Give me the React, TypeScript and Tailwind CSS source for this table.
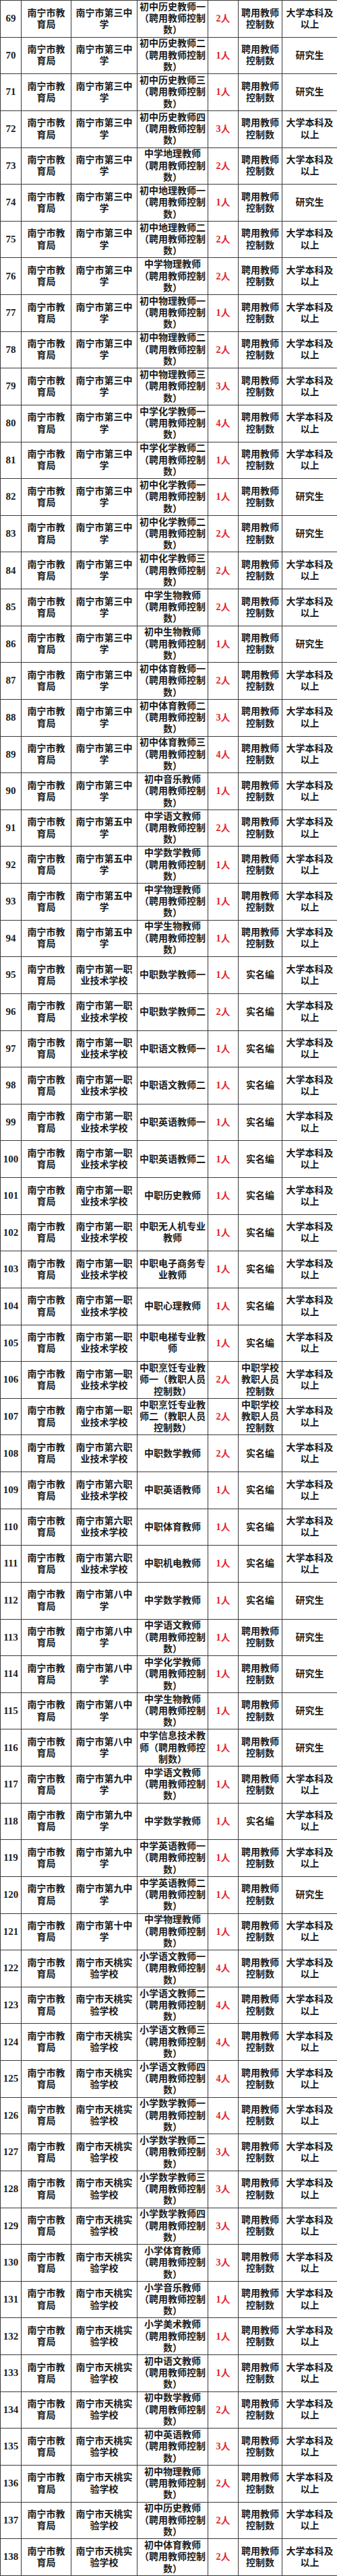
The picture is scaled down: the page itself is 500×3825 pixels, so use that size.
const DEPT = '南宁市教育局'
const HIRE = '聘用教师控制数'
const REAL = '实名编'
const ZZ = '中职学校教职人员控制数'
const BK = '大学本科及以上'
const YJS = '研究生'
const P = '（聘用教师控制数）'

const S3 = '南宁市第三中学'
const S5 = '南宁市第五中学'
const S8 = '南宁市第八中学'
const S9 = '南宁市第九中学'
const S10 = '南宁市第十中学'
const ZY1 = '南宁市第一职业技术学校'
const ZY6 = '南宁市第六职业技术学校'
const TT = '南宁市天桃实验学校'

type Row = [number, string, string, number, string, string]

const rows: Row[] = [
  [69, S3, '初中历史教师一' + P, 2, HIRE, BK],
  [70, S3, '初中历史教师二' + P, 1, HIRE, YJS],
  [71, S3, '初中历史教师三' + P, 1, HIRE, YJS],
  [72, S3, '初中历史教师四' + P, 3, HIRE, BK],
  [73, S3, '中学地理教师' + P, 2, HIRE, BK],
  [74, S3, '初中地理教师一' + P, 1, HIRE, YJS],
  [75, S3, '初中地理教师二' + P, 2, HIRE, BK],
  [76, S3, '中学物理教师' + P, 2, HIRE, BK],
  [77, S3, '初中物理教师一' + P, 1, HIRE, BK],
  [78, S3, '初中物理教师二' + P, 2, HIRE, BK],
  [79, S3, '初中物理教师三' + P, 3, HIRE, BK],
  [80, S3, '中学化学教师一' + P, 4, HIRE, BK],
  [81, S3, '中学化学教师二' + P, 1, HIRE, BK],
  [82, S3, '初中化学教师一' + P, 1, HIRE, YJS],
  [83, S3, '初中化学教师二' + P, 2, HIRE, YJS],
  [84, S3, '初中化学教师三' + P, 2, HIRE, BK],
  [85, S3, '中学生物教师' + P, 2, HIRE, BK],
  [86, S3, '初中生物教师' + P, 1, HIRE, YJS],
  [87, S3, '初中体育教师一' + P, 2, HIRE, BK],
  [88, S3, '初中体育教师二' + P, 3, HIRE, BK],
  [89, S3, '初中体育教师三' + P, 4, HIRE, BK],
  [90, S3, '初中音乐教师' + P, 1, HIRE, BK],
  [91, S5, '中学语文教师' + P, 2, HIRE, BK],
  [92, S5, '中学数学教师' + P, 1, HIRE, BK],
  [93, S5, '中学物理教师' + P, 1, HIRE, BK],
  [94, S5, '中学生物教师' + P, 1, HIRE, BK],
  [95, ZY1, '中职数学教师一', 1, REAL, BK],
  [96, ZY1, '中职数学教师二', 2, REAL, BK],
  [97, ZY1, '中职语文教师一', 1, REAL, BK],
  [98, ZY1, '中职语文教师二', 1, REAL, BK],
  [99, ZY1, '中职英语教师一', 1, REAL, BK],
  [100, ZY1, '中职英语教师二', 1, REAL, BK],
  [101, ZY1, '中职历史教师', 1, REAL, BK],
  [102, ZY1, '中职无人机专业教师', 1, REAL, BK],
  [103, ZY1, '中职电子商务专业教师', 1, REAL, BK],
  [104, ZY1, '中职心理教师', 1, REAL, BK],
  [105, ZY1, '中职电梯专业教师', 1, REAL, BK],
  [106, ZY1, '中职烹饪专业教师一（教职人员控制数）', 2, ZZ, BK],
  [107, ZY1, '中职烹饪专业教师二（教职人员控制数）', 2, ZZ, BK],
  [108, ZY6, '中职数学教师', 2, REAL, BK],
  [109, ZY6, '中职英语教师', 1, REAL, BK],
  [110, ZY6, '中职体育教师', 1, REAL, BK],
  [111, ZY6, '中职机电教师', 1, REAL, BK],
  [112, S8, '中学数学教师', 1, REAL, YJS],
  [113, S8, '中学语文教师' + P, 1, HIRE, YJS],
  [114, S8, '中学化学教师' + P, 1, HIRE, YJS],
  [115, S8, '中学生物教师' + P, 1, HIRE, YJS],
  [116, S8, '中学信息技术教师' + P, 1, HIRE, YJS],
  [117, S9, '中学语文教师' + P, 1, HIRE, BK],
  [118, S9, '中学数学教师', 1, REAL, BK],
  [119, S9, '中学英语教师一' + P, 1, HIRE, BK],
  [120, S9, '中学英语教师二' + P, 1, HIRE, YJS],
  [121, S10, '中学物理教师' + P, 1, HIRE, BK],
  [122, TT, '小学语文教师一' + P, 4, HIRE, BK],
  [123, TT, '小学语文教师二' + P, 4, HIRE, BK],
  [124, TT, '小学语文教师三' + P, 4, HIRE, BK],
  [125, TT, '小学语文教师四' + P, 4, HIRE, BK],
  [126, TT, '小学数学教师一' + P, 4, HIRE, BK],
  [127, TT, '小学数学教师二' + P, 3, HIRE, BK],
  [128, TT, '小学数学教师三' + P, 3, HIRE, BK],
  [129, TT, '小学数学教师四' + P, 3, HIRE, BK],
  [130, TT, '小学体育教师' + P, 3, HIRE, BK],
  [131, TT, '小学音乐教师' + P, 1, HIRE, BK],
  [132, TT, '小学美术教师' + P, 1, HIRE, BK],
  [133, TT, '初中语文教师' + P, 1, HIRE, BK],
  [134, TT, '初中数学教师' + P, 2, HIRE, BK],
  [135, TT, '初中英语教师' + P, 3, HIRE, BK],
  [136, TT, '初中物理教师' + P, 2, HIRE, BK],
  [137, TT, '初中历史教师' + P, 2, HIRE, BK],
  [138, TT, '初中体育教师' + P, 2, HIRE, BK],
]

const cell = 'border border-[#3a3a3a] text-center align-middle leading-[17.3px]'

export default function App() {
  return (
    <div className="w-[500px] bg-white text-[#1c1c1c] font-['Liberation_Serif','Noto_Sans_CJK_SC',serif] font-bold text-[14px]">
      <table className="w-[500px] table-fixed border-collapse">
        <colgroup>
          <col className="w-[31px]" />
          <col className="w-[74px]" />
          <col className="w-[98px]" />
          <col className="w-[105px]" />
          <col className="w-[45px]" />
          <col className="w-[65px]" />
          <col className="w-[82px]" />
        </colgroup>
        <tbody>
          {rows.map(([no, school, job, count, kind, edu]) => (
            <tr key={no} className="h-[54.64px]">
              <td className={`${cell} px-0 text-[15px]`}>{no}</td>
              <td className={`${cell} px-1`}>{DEPT}</td>
              <td className={`${cell} px-1`}>{school}</td>
              <td className={`${cell} px-[2px]`}>{job}</td>
              <td className={`${cell} px-0 text-[#e3232b]`}>{count}人</td>
              <td className={`${cell} px-[3px]`}>{kind}</td>
              <td className={`${cell} px-1`}>{edu}</td>
            </tr>
          ))}
        </tbody>
      </table>
    </div>
  )
}
